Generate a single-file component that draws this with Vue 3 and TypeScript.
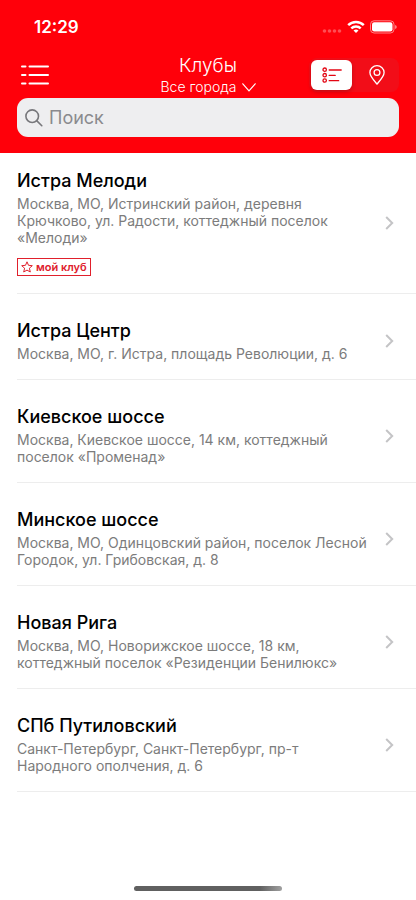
<script setup lang="ts">
import { ref } from 'vue'

interface Club {
  name: string
  address: string
  mine?: boolean
}

const clubs: Club[] = [
  {
    name: 'Истра Мелоди',
    address: 'Москва, МО, Истринский район, деревня Крючково, ул. Радости, коттеджный поселок «Мелоди»',
    mine: true,
  },
  { name: 'Истра Центр', address: 'Москва, МО, г. Истра, площадь Революции, д. 6' },
  { name: 'Киевское шоссе', address: 'Москва, Киевское шоссе, 14 км, коттеджный поселок «Променад»' },
  { name: 'Минское шоссе', address: 'Москва, МО, Одинцовский район, поселок Лесной Городок, ул. Грибовская, д. 8' },
  { name: 'Новая Рига', address: 'Москва, МО, Новорижское шоссе, 18 км, коттеджный поселок «Резиденции Бенилюкс»' },
  { name: 'СПб Путиловский', address: 'Санкт-Петербург, Санкт-Петербург, пр-т Народного ополчения, д. 6' },
]

const query = ref('')
const view = ref<'list' | 'map'>('list')
</script>

<template>
  <div class="screen">
    <header class="header">
      <div class="status">
        <span class="time">12:29</span>
        <div class="indicators">
          <svg class="dots" width="20" height="14" viewBox="0 0 20 14" fill="#fff" fill-opacity=".3" aria-hidden="true">
            <circle cx="2.500" cy="11" r="1.800" /><circle cx="7.500" cy="11" r="1.800" />
            <circle cx="12.500" cy="11" r="1.800" /><circle cx="17.500" cy="11" r="1.800" />
          </svg>
          <svg width="18" height="14" viewBox="0 0 18 14" fill="none" stroke="#fff" stroke-width="2.500" aria-hidden="true">
            <path d="M1.200 5.200C5.500.9 12.500.9 16.800 5.200" />
            <path d="M4.300 8.300C6.900 5.800 11.100 5.800 13.700 8.300" />
            <path d="M9 13 6.500 10.500Q9 8.300 11.500 10.500Z" fill="#fff" stroke="none" />
          </svg>
          <svg width="27" height="14" viewBox="0 0 27 14" aria-hidden="true">
            <rect x=".5" y=".8" width="23.500" height="12.200" rx="3.600" fill="none" stroke="#fff" stroke-opacity=".5" />
            <rect x="2" y="2.300" width="20.500" height="9.200" rx="2.200" fill="#fff" />
            <path d="M25.200 5v4q1.500-.5 1.500-2t-1.500-2Z" fill="#fff" fill-opacity=".6" />
          </svg>
        </div>
      </div>

      <div class="nav">
        <button class="menu" type="button" aria-label="Меню">
          <svg width="28" height="20" viewBox="0 0 28 20" stroke="#fff" stroke-width="2" stroke-linecap="round" aria-hidden="true">
            <path d="M1 1.500h3.500M8.500 1.500H27M1 10h3.500M8.500 10H27M1 18.500h3.500M8.500 18.500H27" />
          </svg>
        </button>
        <div class="heading">
          <h1>Клубы</h1>
          <button class="city" type="button">
            Все города
            <svg width="14" height="9" viewBox="0 0 14 9" fill="none" stroke="#fff" stroke-width="1.200" stroke-linecap="round" aria-hidden="true">
              <path d="m.8.800 6.200 7 6.200-7" />
            </svg>
          </button>
        </div>
        <div class="switcher">
          <button type="button" :class="{ active: view === 'list' }" aria-label="Список" @click="view = 'list'">
            <svg width="20" height="16" viewBox="0 0 20 16" fill="none" stroke="currentColor" stroke-width="1.300" stroke-linecap="round" aria-hidden="true">
              <circle cx="2.700" cy="2.700" r="1.700" /><circle cx="2.700" cy="8.200" r="1.700" /><circle cx="2.700" cy="13.500" r="1.700" />
              <path d="M7.200 3h12M7.200 8.400h6M7.200 13.700h9.500" />
            </svg>
          </button>
          <button type="button" :class="{ active: view === 'map' }" aria-label="Карта" @click="view = 'map'">
            <svg width="16" height="20" viewBox="0 0 16 20" fill="none" stroke="currentColor" stroke-width="1.300" aria-hidden="true">
              <path d="M8 19C5.500 16 .9 11.500.9 7.500a7.100 6.800 0 0 1 14.200 0C15.100 11.500 10.500 16 8 19Z" />
              <circle cx="8" cy="7.500" r="2.900" />
            </svg>
          </button>
        </div>
      </div>

      <label class="search">
        <svg width="18" height="18" viewBox="0 0 18 18" fill="none" stroke="#77777b" stroke-width="1.600" stroke-linecap="round" aria-hidden="true">
          <circle cx="7.200" cy="7.200" r="6.300" /><path d="m11.900 11.900 4.900 4.800" />
        </svg>
        <input v-model="query" type="text" placeholder="Поиск" aria-label="Поиск" />
      </label>
    </header>

    <main>
      <ul class="clubs">
        <li v-for="club in clubs" :key="club.name">
          <a class="club" href="#">
            <div class="info">
              <h2>{{ club.name }}</h2>
              <p>{{ club.address }}</p>
              <span v-if="club.mine" class="badge">
                <svg width="12" height="12" viewBox="0 0 12 12" fill="none" stroke="currentColor" stroke-linejoin="round" aria-hidden="true">
                  <path d="m6 .8 1.500 3.500 3.800.4-2.900 2.500.9 3.800L6 9.100 2.700 11l.9-3.800L.7 4.700l3.800-.4Z" />
                </svg>
                мой клуб
              </span>
            </div>
            <svg class="chevron" width="9" height="14" viewBox="0 0 9 14" fill="none" stroke="#c4c4c6" stroke-width="2" aria-hidden="true">
              <path d="m1.200 1 6 6-6 6" />
            </svg>
          </a>
        </li>
      </ul>
    </main>

    <div class="home"></div>
  </div>
</template>

<style>
body {
  margin: 0;
  background: #fff;
}
</style>

<style scoped>
* {
  box-sizing: border-box;
}
.screen {
  display: flex;
  flex-direction: column;
  min-height: 100vh;
  font-family: Inter, "Liberation Sans", sans-serif;
  color: #000;
}
button {
  display: flex;
  align-items: center;
  justify-content: center;
  margin: 0;
  padding: 0;
  border: 0;
  background: none;
  color: #fff;
  font: inherit;
  cursor: pointer;
}
svg {
  flex: none;
}
.header {
  padding: 16px 17px;
  background: #ff000a;
  color: #fff;
}
.status {
  display: flex;
  align-items: center;
  justify-content: space-between;
  height: 22px;
  padding: 0 2px 0 17px;
  font-size: 17px;
  font-weight: 600;
}
.indicators {
  display: flex;
  align-items: center;
  gap: 5px;
}
.nav {
  display: grid;
  grid-template-columns: 1fr auto 1fr;
  align-items: center;
  height: 40px;
  margin: 16px 0 4px;
}
.menu {
  justify-self: start;
  padding: 4px;
}
.heading {
  display: flex;
  flex-direction: column;
  align-items: center;
}
h1 {
  margin: 0;
  font-size: 19px;
  font-weight: 300;
  line-height: 24px;
}
.city {
  gap: 5px;
  font-size: 14px;
  font-weight: 300;
  line-height: 18px;
}
.switcher {
  display: flex;
  gap: 4px;
  justify-self: end;
  width: 90px;
  padding: 2px;
  border-radius: 8px;
  background: #f20d18;
}
.switcher button {
  flex: 1;
  height: 30px;
  border-radius: 6px;
}
.switcher .active {
  background: #fff;
  color: #e30613;
  box-shadow: 0 2px 4px rgba(0, 0, 0, 0.2);
}
.search {
  display: flex;
  align-items: center;
  gap: 6px;
  height: 39px;
  padding: 0 8px;
  border-radius: 11px;
  background: #eeeef0;
}
.search input {
  flex: 1;
  min-width: 0;
  padding: 0;
  border: 0;
  outline: 0;
  background: none;
  color: #000;
  font: inherit;
  font-size: 18px;
}
.search input::placeholder {
  color: #8a8a8e;
  opacity: 1;
}
.clubs {
  display: flex;
  flex-direction: column;
  gap: 9px;
  margin: 0;
  padding: 0 0 0 17px;
  list-style: none;
}
.club {
  display: flex;
  align-items: center;
  justify-content: space-between;
  gap: 14px;
  padding: 17px 22px 17px 0;
  border-bottom: 1px solid #ededed;
  color: inherit;
  text-decoration: none;
}
h2 {
  margin: 0 0 3px;
  font-size: 18px;
  font-weight: 500;
  line-height: 22px;
}
p {
  margin: 0;
  color: #7c7c7c;
  font-size: 14px;
  line-height: 17px;
}
.badge {
  display: flex;
  align-items: center;
  gap: 3px;
  width: fit-content;
  height: 18px;
  margin-top: 12px;
  padding: 0 3px;
  border: 1px solid #e0202c;
  color: #e0202c;
  font-size: 11px;
  font-weight: 600;
}
.home {
  width: 148px;
  height: 5px;
  margin: auto auto 9px;
  border-radius: 3px;
  background: linear-gradient(90deg, #606060 85%, #a0a0a0);
}
</style>
